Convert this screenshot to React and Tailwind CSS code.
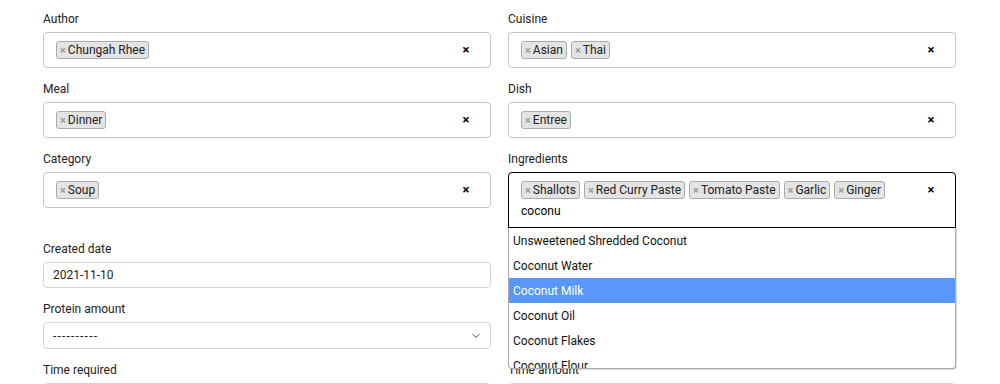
import { ChevronDown } from "lucide-react";

const Tag = ({ label }) => (
  <span className="flex items-center h-[18px] pl-[3px] pr-[3px] bg-[#e4e4e4] border border-[#aaa] rounded-[3px] text-[12px] leading-none text-[#222] whitespace-nowrap">
    <span className="text-[#999] font-bold text-[11px] mr-[2px]">×</span>
    {label}
  </span>
);

const Label = ({ children }) => (
  <label className="block h-[14px] leading-[14px] text-[12px] text-[#222] mb-[6px]">{children}</label>
);

function MultiSelect({ label, tags }) {
  return (
    <div>
      <Label>{label}</Label>
      <div className="flex items-center h-[36px] border border-[#c4c4c4] rounded-[4px] pl-[12px]">
        <div className="flex flex-1 gap-[4px]">
          {tags.map((t) => (
            <Tag key={t} label={t} />
          ))}
        </div>
        <span className="w-[10px] mr-[19px] text-center text-[13px] font-bold text-black">×</span>
      </div>
    </div>
  );
}

const options = [
  "Unsweetened Shredded Coconut",
  "Coconut Water",
  "Coconut Milk",
  "Coconut Oil",
  "Coconut Flakes",
  "Coconut Flour",
];

function Ingredients() {
  return (
    <div className="relative z-10">
      <Label>Ingredients</Label>
      <div className="flex items-start h-[56px] border border-black rounded-t-[4px] pl-[12px] pt-[8px]">
        <div className="flex-1">
          <div className="flex gap-[4px]">
            {["Shallots", "Red Curry Paste", "Tomato Paste", "Garlic", "Ginger"].map((t) => (
              <Tag key={t} label={t} />
            ))}
          </div>
          <div className="mt-[4px] h-[16px] leading-[16px] text-[12px] text-black">coconu</div>
        </div>
        <span className="w-[10px] mr-[19px] mt-[1px] text-center text-[13px] font-bold text-black leading-[16px]">×</span>
      </div>
      <div className="absolute left-0 right-0 top-full h-[141px] bg-white border border-t-0 border-[#aaa] rounded-b-[4px] overflow-hidden shadow-[1px_1px_1px_rgba(0,0,0,0.15)]">
        {options.map((o, i) => (
          <div
            key={o}
            className={
              i === 2
                ? "h-[25px] leading-[26px] pl-[4px] text-[12px] bg-[#5897fb] text-white"
                : "h-[25px] leading-[26px] pl-[4px] text-[12px] text-[#111]"
            }
          >
            {o}
          </div>
        ))}
      </div>
    </div>
  );
}

function TextInput({ label, value }) {
  return (
    <div>
      <Label>{label}</Label>
      <div className="h-[26px] border border-[#d4d4d4] rounded-[4px] px-[9px] flex items-center text-[12px] text-[#222]">
        {value}
      </div>
    </div>
  );
}

function Select({ label, value }) {
  return (
    <div>
      <Label>{label}</Label>
      <div className="h-[27px] border border-[#d4d4d4] rounded-[4px] pl-[9px] pr-[8px] flex items-center justify-between text-[12px] text-[#222]">
        <span className="tracking-[1.2px]">{value}</span>
        <ChevronDown size={12} strokeWidth={2} className="text-[#444]" />
      </div>
    </div>
  );
}

// fields on the right that sit under the open dropdown
const Hidden = ({ h }) => (
  <div>
    <div className="h-[14px] mb-[6px]" />
    <div className={h === 27 ? "h-[27px] border border-[#d4d4d4] rounded-[4px]" : "h-[26px] border border-[#d4d4d4] rounded-[4px]"} />
  </div>
);

export default function App() {
  return (
    <div className="w-[1000px] h-[384px] overflow-hidden bg-white font-['Roboto',Arial,sans-serif]">
      <div className="grid grid-cols-2 gap-x-[17px] gap-y-[14px] pl-[43px] pr-[44px] pt-[12px]">
        <MultiSelect label="Author" tags={["Chungah Rhee"]} />
        <MultiSelect label="Cuisine" tags={["Asian", "Thai"]} />
        <MultiSelect label="Meal" tags={["Dinner"]} />
        <MultiSelect label="Dish" tags={["Entree"]} />
        <MultiSelect label="Category" tags={["Soup"]} />
        <Ingredients />
        <TextInput label="Created date" value="2021-11-10" />
        <Hidden h={26} />
        <Select label="Protein amount" value="----------" />
        <Hidden h={27} />
        <TextInput label="Time required" value="" />
        <TextInput label="Time amount" value="" />
      </div>
    </div>
  );
}
